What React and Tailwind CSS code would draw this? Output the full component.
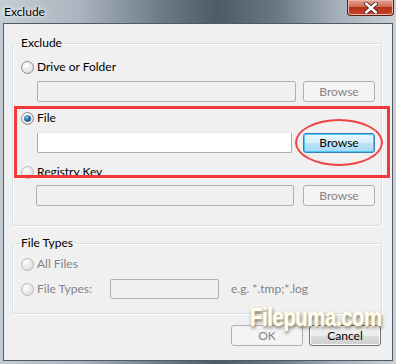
import React from "react";

const font = { fontFamily: 'Lato,"Segoe UI","Noto Sans",sans-serif' };

function Radio({ checked, disabled }) {
  return (
    <svg width="13" height="13" viewBox="0 0 13 13" className="shrink-0">
      <defs>
        <radialGradient id={checked ? "rgc" : "rgu"} cx="40%" cy="35%" r="70%">
          <stop offset="0%" stopColor="#ffffff" />
          <stop offset="100%" stopColor={disabled ? "#e6e6e6" : "#d9d9d9"} />
        </radialGradient>
        <radialGradient id="dot" cx="40%" cy="35%" r="70%">
          <stop offset="0%" stopColor="#8fd6f7" />
          <stop offset="55%" stopColor="#1b6fa8" />
          <stop offset="100%" stopColor="#0b3e66" />
        </radialGradient>
      </defs>
      <circle cx="6.5" cy="6.5" r="6" fill={`url(#${checked ? "rgc" : "rgu"})`} stroke={disabled ? "#b9b9b9" : "#8e8f8f"} />
      {checked && <circle cx="6.5" cy="6.5" r="3.3" fill="url(#dot)" />}
    </svg>
  );
}

function Btn({ children, variant }) {
  if (variant === "disabled")
    return (
      <div className="w-[72px] h-[21px] rounded-[3px] border border-[#adb2b5] bg-[#f4f4f4] text-[#838383] flex items-center justify-center text-[12px]">
        {children}
      </div>
    );
  if (variant === "focus")
    return (
      <div className="w-[72px] h-[20px] rounded-[3px] border border-[#3c7fb1] bg-[linear-gradient(#e8f6fd,#d6eefb_50%,#bde3f7_51%,#a7d9f5)] shadow-[inset_0_0_0_1px_#48c6f4] text-black flex items-center justify-center text-[12px]">
        {children}
      </div>
    );
  return (
    <div className="w-[72px] h-[21px] rounded-[3px] border border-[#707070] bg-[linear-gradient(#f2f2f2,#ebebeb_50%,#dddddd_51%,#cfcfcf)] shadow-[inset_0_0_0_1px_#fcfcfc] text-black flex items-center justify-center text-[12px]">
      {children}
    </div>
  );
}

function Box({ w, white }) {
  return (
    <div
      className={`h-[21px] border rounded-[2px] ${white ? "bg-white border-[#abadb3] border-t-[#e3e9ef]" : "bg-[#f0f0f0] border-[#afafaf]"}`}
      style={{ width: w }}
    />
  );
}

export default function App() {
  return (
    <div className="relative w-[396px] h-[364px] overflow-hidden text-[12px] text-black" style={font}>
      {/* frame */}
      <div className="absolute inset-0 bg-[linear-gradient(90deg,#c4cdd5_0%,#aab4be_20%,#6f7d8a_40%,#4d5b69_55%,#6a7886_70%,#a5afb9_85%,#c9d0d6_100%)]" />
      <div className="relative flex flex-col h-full">
        {/* title bar */}
        <div className="h-[23px] flex items-start justify-between">
          <div className="pl-[4px] pt-[3px] text-[12px] text-black [text-shadow:0_0_6px_#ffffff,0_0_3px_#ffffff]">Exclude</div>
          <div className="mr-[2px] w-[47px] h-[16px] rounded-b-[4px] border border-[#5a1d16] border-t-0 bg-[linear-gradient(#e3a393,#cc6a52_45%,#b3301a_50%,#c8452d_100%)] flex items-center justify-center shadow-[inset_0_0_0_1px_#f0b7a8]">
            <svg width="14" height="12" viewBox="0 0 14 12">
              <path d="M2 1.5 L12 10.5 M12 1.5 L2 10.5" stroke="#3d1d18" strokeWidth="4" strokeLinecap="round" />
              <path d="M2 1.5 L12 10.5 M12 1.5 L2 10.5" stroke="#ffffff" strokeWidth="2.4" strokeLinecap="round" />
            </svg>
          </div>
        </div>
        {/* client */}
        <div className="mx-[3px] mb-[3px] flex-1 bg-[#f0f0f0] border border-[#4d5b69] relative flex flex-col">
          <div className="pl-[8px] pr-[10px] pt-[19px]">
            {/* Exclude group */}
            <div className="relative border border-[#d5dfe5] rounded-[3px] shadow-[inset_1px_1px_0_#ffffff,1px_1px_0_#ffffff] h-[183px] pt-[15px] pl-[8px]">
              <div className="absolute -top-[9px] left-[6px] px-[2px] bg-[#f0f0f0] leading-[16px]">Exclude</div>
              <div className="flex items-center gap-[3px] h-[16px]">
                <Radio />
                <span>Drive or Folder</span>
              </div>
              <div className="flex pl-[16px] pt-[6px] gap-[7px]">
                <Box w={259} />
                <Btn variant="disabled">Browse</Btn>
              </div>
              <div className="flex items-center gap-[3px] h-[16px] mt-[8px]">
                <Radio checked />
                <span>File</span>
              </div>
              <div className="flex pl-[16px] pt-[6px] gap-[11px] items-start">
                <Box w={255} white />
                <div className="pt-[1px]"><Btn variant="focus">Browse</Btn></div>
              </div>
              <div className="flex items-center gap-[3px] h-[16px] mt-[11px]">
                <Radio disabled />
                <span>Registry Key</span>
              </div>
              <div className="flex pl-[15px] pt-[5px] gap-[9px]">
                <Box w={258} />
                <Btn variant="disabled">Browse</Btn>
              </div>
            </div>
            {/* File Types group */}
            <div className="relative mt-[17px] border border-[#d5dfe5] rounded-[3px] shadow-[inset_1px_1px_0_#ffffff,1px_1px_0_#ffffff] h-[71px] pt-[12px] pl-[8px] text-[#838383]">
              <div className="absolute -top-[9px] left-[6px] px-[2px] bg-[#f0f0f0] leading-[16px] text-black">File Types</div>
              <div className="flex items-center gap-[3px] h-[16px]">
                <Radio disabled />
                <span>All Files</span>
              </div>
              <div className="flex items-center h-[20px] mt-[7px]">
                <div className="flex items-center gap-[3px] w-[89px]">
                  <Radio disabled />
                  <span>File Types:</span>
                </div>
                <div className="w-[109px] h-[20px] border border-[#afafaf] rounded-[2px] bg-[#f0f0f0]" />
                <span className="ml-[12px]">e.g. *.tmp;*.log</span>
              </div>
            </div>
            <div className="flex justify-end gap-[6px] mt-[11px] pr-[1px]">
              <Btn variant="disabled">OK</Btn>
              <Btn>Cancel</Btn>
            </div>
          </div>
        </div>
      </div>
      {/* annotations */}
      <div className="absolute left-[14px] top-[106px] w-[376px] h-[72px] border-[3px] border-[#f03a3a]" />
      <div className="absolute left-[295px] top-[119px] w-[88px] h-[47px] rounded-[50%] border-[2px] border-[#f04444]" />
      <div className="absolute left-[250px] top-[304px] origin-left scale-x-[0.78] whitespace-nowrap text-[26px] leading-[26px] font-bold tracking-[-0.5px] text-[#fffdf0] [text-shadow:0_0_2px_#fff6c8,1px_2px_4px_rgba(50,40,20,0.75)]" style={{ fontFamily: '"Liberation Sans",Arial,sans-serif' }}>
        Filepuma.com
      </div>
    </div>
  );
}
